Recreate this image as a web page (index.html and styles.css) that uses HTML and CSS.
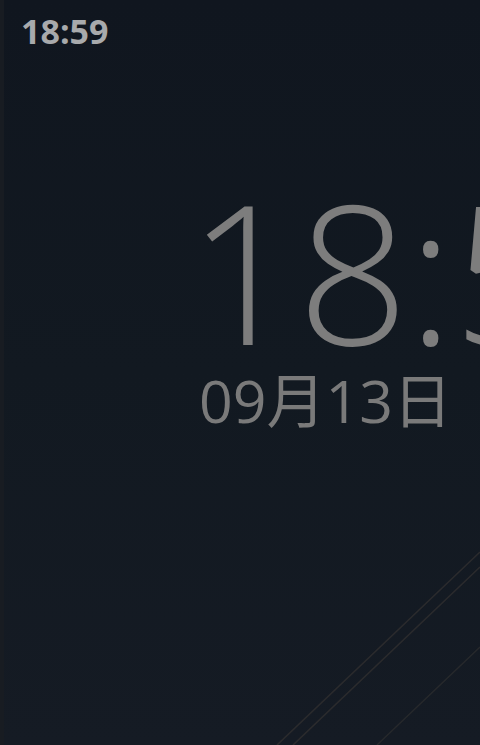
FILE: index.html
```html
<!DOCTYPE html>
<html lang="zh">
<head>
<meta charset="utf-8">
<link rel="stylesheet" href="styles.css">
</head>
<body>
<div class="screen">
  <div class="status">18:59</div>
  <div class="clock">
    <div class="time">18:59</div>
    <div class="date">09月13日</div>
  </div>
  <svg class="lines" width="480" height="745" viewBox="0 0 480 745">
    <line x1="277" y1="745" x2="480" y2="552" stroke="#2b2b2d" stroke-width="1.6"/>
    <line x1="293" y1="745" x2="480" y2="567" stroke="#2b2b2d" stroke-width="1.6"/>
    <line x1="377" y1="745" x2="480" y2="647" stroke="#27292c" stroke-width="1.4"/>
  </svg>
</div>
</body>
</html>
```

FILE: styles.css
```css
html, body {
  margin: 0;
  padding: 0;
  background: #121821;
}
.screen {
  position: relative;
  width: 480px;
  height: 745px;
  overflow: hidden;
  background: linear-gradient(180deg, #10161f 0%, #121921 50%, #151b24 100%);
  font-family: "Open Sans", "Noto Sans CJK SC", sans-serif;
  box-shadow: inset 4px 0 0 #181c22;
}
.status {
  padding: 8px 0 0 21px;
  font-size: 34px;
  font-weight: 700;
  line-height: 46px;
  color: #a8aaac;
}
.clock {
  padding: 136px 0 0 188px;
  white-space: nowrap;
}
.time {
  font-size: 194px;
  font-weight: 300;
  line-height: 160px;
  color: #7d7d7d;
  letter-spacing: -1px;
}
.date {
  margin: 20px 0 0 11px;
  font-size: 59px;
  font-weight: 400;
  line-height: 60px;
  color: #7a7a7a;
}
.lines {
  position: absolute;
  left: 0;
  top: 0;
}
```
